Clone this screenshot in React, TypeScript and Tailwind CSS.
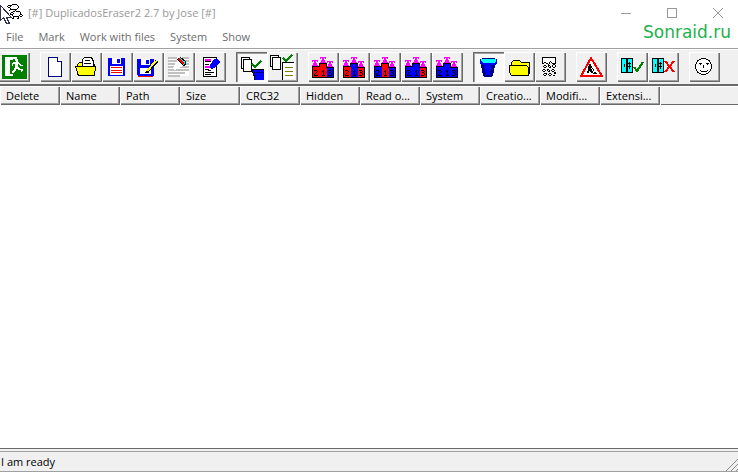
import React from 'react';
import clsx from 'clsx';

const palette: Record<string, string> = {
  k: '#000000',
  w: '#ffffff',
  m: '#ff00ff',
  b: '#0000ff',
  r: '#ff0000',
};

// Draws a little bitmap: one character per pixel, a dot is transparent.
function Bitmap({ x, y, rows }: { x: number; y: number; rows: string[] }) {
  return (
    <>
      {rows.map((row, j) =>
        row.split('').map((ch, i) =>
          palette[ch] ? (
            <rect key={`${i}-${j}`} x={x + i} y={y + j} width="1" height="1" fill={palette[ch]} />
          ) : null
        )
      )}
    </>
  );
}

const ExitIcon = () => (
  <>
    <path fill="#008000" d="M2 3h25v24H2z" />
    <path fill="#fff" d="M5 5h12v2h-4v1h-2v14h2v2H5z" />
    <path fill="#008000" d="M10 8h1v14h-1z" />
    <Bitmap
      x={12}
      y={7}
      rows={[
        '...www.....',
        '...www.....',
        '....ww.....',
        '.wwwwww....',
        'wwwwwwww...',
        'w..www.ww..',
        'w..www..www',
        '...www.....',
        '...wwww....',
        '..wwwwww...',
        '..ww..wwwww',
        '.www.....ww',
        'www......w.',
        'ww.........',
      ]}
    />
  </>
);

const PageIcon = () => (
  <>
    <path fill="#fff" stroke="#000080" d="M8.500 5.500h9l4 4v15h-13z" />
    <path fill="#fff" stroke="#000080" d="M17.500 5.500v4h4" />
  </>
);

const OpenIcon = () => (
  <>
    <path fill="#ff0" stroke="#000" d="M6.500 22.500v-10l2-2h4v2h11v10z" />
    <path fill="#fff" stroke="#000" d="M11.500 14.500v-7l2-2h7l2 4v5z" />
    <path stroke="#000" d="M14 8.500h5M13 11.500h7" />
    <path fill="#ff0" stroke="#000" d="M4.500 14.500h20l-1 9h-16z" />
  </>
);

const SaveIcon = () => (
  <>
    <path fill="#00f" d="M6 6h16l1 1v17H6z" />
    <path fill="#fff" d="M10 6h9v6h-9zM8 14h13v9H8z" />
    <path fill="#00f" d="M15 7h3v4h-3z" />
    <path stroke="#f00" d="M9 15.500h11M9 18.500h11M9 20.500h11" />
  </>
);

const SaveAsIcon = () => (
  <>
    <path fill="#00f" d="M4 7h17v17H5l-1-1z" />
    <path fill="#fff" d="M8 7h9v6H8zM7 16h11v6H7z" />
    <path fill="#00f" d="M13 8h3v4h-3z" />
    <path stroke="#f00" d="M5 24.500h15" />
    <path stroke="#000" strokeWidth="3" d="M24 9L14 20" />
    <path stroke="#ff0" strokeWidth="2" d="M23 9L14 19" />
    <path stroke="#000" d="M12 20.500h3" />
  </>
);

const EraserIcon = () => (
  <>
    <path fill="#fff" d="M5 5h20v19H5z" />
    <path
      stroke="#c0c0c0"
      strokeWidth="2"
      d="M4 6h9M18 6h7M4 9h9M20 9h5M4 12h7M20 12h5M4 15h6M16 15h9M4 18h21M4 21h17M4 24h12"
    />
    <path fill="#fff" d="M9 15l5-5 4 2 1 2-5 3-4 1z" />
    <path fill="#0ff" stroke="#000" d="M13.500 7.500l3-2 5 4v3l-2 1z" />
    <path stroke="#f00" strokeWidth="2" d="M15 7l5 5" />
  </>
);

const EditIcon = () => (
  <>
    <path fill="#fff" stroke="#000" d="M8.500 5.500h13v19h-13z" />
    <path stroke="#f0f" strokeWidth="2" d="M10 8h6M10 15h5" />
    <path stroke="#000" d="M10 9.500h6M10 12.500h4M10 17.500h4M10 20.500h9M10 22.500h6" />
    <path fill="#00f" d="M15 13l4-6h4l2 3-5 6-4 1-1-1z" />
    <path stroke="#000" d="M13 18.500h3" />
  </>
);

const Check = ({ x, y }: { x: number; y: number }) => (
  <path fill="none" stroke="#008000" strokeWidth="2" d={`M${x} ${y}l3 3 6-6`} />
);

const MarkAllIcon = () => (
  <>
    <path fill="#fff" stroke="#000" d="M5.500 5.500h8v11h-8z" />
    <path fill="#fff" stroke="#000" d="M7.500 7.500h8v12h-8z" />
    <Check x={16} y={12} />
    <path fill="#00f" d="M17 18h11v10h-9l-1-7h-1z" />
    <path fill="none" stroke="#000" d="M28 17.500H16.500v3h1v3h1v4" />
    <path stroke="#000080" d="M18 20.500h10" />
  </>
);

const MarkListIcon = () => (
  <>
    <path fill="#fff" stroke="#000" d="M3.500 3.500h8v11h-8z" />
    <path fill="#fff" stroke="#000" d="M5.500 5.500h8v12h-8z" />
    <path fill="#fff" d="M16 10h12v17H16z" />
    <Check x={16} y={6} />
    <path fill="none" stroke="#000" d="M27 10.500H15.500v17" />
    <path stroke="#808000" d="M18 15.500h8M18 19.500h8M18 23.500h8" />
  </>
);

const figure = ['mmmmmm', 'm.mm.m', '..mm..', '.mmmm.', '.mmmm.', 'mmmmmm'];

// The three letters are the colours of the second, first and third step.
function PodiumIcon({ steps }: { steps: string }) {
  const [second, first, third] = steps.split('').map((s) => palette[s]);
  return (
    <>
      <Bitmap x={4} y={8} rows={figure} />
      <Bitmap x={12} y={5} rows={figure} />
      <Bitmap x={19} y={9} rows={figure} />
      <path fill={second} d="M4 15h8v11H4z" />
      <path fill={first} d="M12 11h7v15h-7z" />
      <path fill={third} d="M19 16h7v10h-7z" />
      <path fill="none" stroke="#000" d="M4.500 26V14.500h7v-3h7v4h7V26M4 25.500h22" />
      <Bitmap x={6} y={18} rows={['kkk.', '...k', '..k.', '.k..', 'k...', 'kkkk']} />
      <Bitmap x={14} y={18} rows={['.k.', 'kk.', '.k.', '.k.', '.k.', 'kkk']} />
      <Bitmap x={20} y={18} rows={['kkk.', '...k', '.kk.', '...k', '...k', 'kkk.']} />
    </>
  );
}

const BucketIcon = () => (
  <>
    <path fill="#000080" d="M7 7h2V6h13v1h2v4l-2 2-2 11-2 1h-6l-2-1-2-11-1-1z" />
    <path fill="#00f" d="M7 9h3v2h11V9h3v2l-2 2h-4l-1 10h-4l-2-10H8l-1-1z" />
    <path fill="#0ff" d="M8 7h15v2l-2 2H10L8 9z" />
  </>
);

const FolderIcon = () => (
  <>
    <path fill="#ff0" stroke="#000" d="M7.500 13.500v-3l2-2h6l2 2h8v11h-2" />
    <path fill="#ff0" stroke="#000" d="M5.500 13.500h17l2 2v8h-17l-2-3z" />
  </>
);

const ShredIcon = () => (
  <>
    <path fill="#fff" stroke="#000" d="M7.500 5.500h13v6h-3l-2-2-2 3-3-2-3 1z" />
    <Bitmap
      x={7}
      y={12}
      rows={[
        '...........kk..',
        '..kk..kk..k..k.',
        '.k..k.kwk.k..k.',
        '..kk...kk..kk..',
        '...............',
        '.kk..kk...kk...',
        'kwwk.kwk.kwwk..',
        '.kk...kk..kk...',
        '............kk.',
        '..kkk..kk...kk.',
        '.kwwk.kwwk.....',
        '..kk...kk..kk..',
      ]}
    />
  </>
);

const WorksIcon = () => (
  <>
    <path fill="#fff" stroke="#f00" strokeWidth="2" d="M15 6L5 24h21z" />
    <path fill="#000" d="M13 12h2v2h-2zM12 14h3v3h1l1 4h-2l-1-3-1 3h-2l1-4zM19 19l2 3h-4z" />
    <path stroke="#000" d="M15 14.500l3 4" />
  </>
);

const Doors = () => (
  <>
    <path fill="#0ff" d="M4 7h12v13H4z" />
    <path fill="none" stroke="#000" d="M4.500 6.500h5v14h-5zM10.500 6.500h5v14h-5zM10 11.500h4M10 14.500h4M12.500 10v7M7.500 12v3" />
  </>
);

const DoorCheckIcon = () => (
  <>
    <Doors />
    <path fill="none" stroke="#008000" strokeWidth="2" d="M17 15l3 4 6-9" />
  </>
);

const DoorCrossIcon = () => (
  <>
    <Doors />
    <path stroke="#f00" strokeWidth="2" d="M17 9l9 11M26 9l-9 11" />
  </>
);

const FaceIcon = () => (
  <>
    <circle cx="14.500" cy="14.500" r="8" fill="#fff" stroke="#000" />
    <path
      stroke="#000"
      d="M10 11.500h3M17 11.500h3M11 12.500h1M18 12.500h1M14.500 13v3M11 18.500h1M12 19.500h6M18 18.500h1"
    />
  </>
);

interface Tool {
  label: string;
  icon: React.ReactNode;
  pressed?: boolean;
}

const groups: Tool[][] = [
  [
    { label: 'New', icon: <PageIcon /> },
    { label: 'Open', icon: <OpenIcon /> },
    { label: 'Save', icon: <SaveIcon /> },
    { label: 'Save as', icon: <SaveAsIcon /> },
    { label: 'Clear list', icon: <EraserIcon /> },
    { label: 'Edit', icon: <EditIcon /> },
  ],
  [
    { label: 'Mark to delete', icon: <MarkAllIcon />, pressed: true },
    { label: 'Mark in list', icon: <MarkListIcon /> },
  ],
  [
    { label: 'Mark first and second', icon: <PodiumIcon steps="rrb" /> },
    { label: 'Mark second and third', icon: <PodiumIcon steps="rbr" /> },
    { label: 'Mark first', icon: <PodiumIcon steps="brb" /> },
    { label: 'Mark third', icon: <PodiumIcon steps="bbr" /> },
    { label: 'Mark none', icon: <PodiumIcon steps="bbb" /> },
  ],
  [
    { label: 'Send to bin', icon: <BucketIcon />, pressed: true },
    { label: 'Move to folder', icon: <FolderIcon /> },
    { label: 'Shred', icon: <ShredIcon /> },
  ],
  [{ label: 'Work', icon: <WorksIcon /> }],
  [
    { label: 'Accept', icon: <DoorCheckIcon /> },
    { label: 'Reject', icon: <DoorCrossIcon /> },
  ],
  [{ label: 'About', icon: <FaceIcon /> }],
];

const menus = ['File', 'Mark', 'Work with files', 'System', 'Show'];

const columns = [
  'Delete', 'Name', 'Path', 'Size', 'CRC32', 'Hidden',
  'Read o...', 'System', 'Creatio...', 'Modifi...', 'Extensi...',
];

function ToolButton({ label, icon, pressed }: Tool) {
  return (
    <button
      type="button"
      aria-label={label}
      aria-pressed={pressed}
      className={clsx(
        'shrink-0',
        pressed
          ? 'bg-[#f8f8f8] shadow-[inset_1px_1px_0_#696969,inset_2px_2px_0_#a0a0a0,inset_-1px_-1px_0_#ffffff]'
          : 'bg-[#f0f0f0] shadow-[inset_1px_1px_0_#ffffff,inset_-1px_-1px_0_#696969,inset_-2px_-2px_0_#a0a0a0]'
      )}
    >
      <svg className="block" width="31" height="30" viewBox="0 0 31 30" fill="none" shapeRendering="crispEdges">
        {icon}
      </svg>
    </button>
  );
}

function TitleBar() {
  return (
    <header className="flex h-[25px] items-center text-[#999999]">
      <svg className="mr-1 shrink-0" width="24" height="25" viewBox="0 0 24 25" shapeRendering="crispEdges">
        <Bitmap
          x={7}
          y={4}
          rows={[
            '.....kkkkk......',
            '.kkkk.....k.....',
            'k..k.......k....',
            '.kk........k....',
            '...k......k.....',
            '...kkkkkkk......',
            '..k.....k.......',
            '......kk.kkkk...',
            '....kk.......k..',
            '...k..k......k..',
            '...kkk.......kk.',
            '.....k......k..k',
            '......kkkkkk.kk.',
            '......k....k....',
            '.....kk...kk....',
          ]}
        />
        <path fill="#fff" stroke="#33334d" d="M0.500 5.500v15l3-3 3 6h3l-3-6h5z" />
      </svg>
      <h1>[#] DuplicadosEraser2 2.7 by Jose [#]</h1>
      <div className="ml-auto flex gap-9 pr-[15px]">
        <button type="button" aria-label="Minimize">
          <svg className="block" width="10" height="10" stroke="#999999" shapeRendering="crispEdges">
            <path d="M0 5.500h10" />
          </svg>
        </button>
        <button type="button" aria-label="Maximize">
          <svg
            className="block"
            width="10"
            height="10"
            fill="none"
            stroke="#999999"
            shapeRendering="crispEdges"
          >
            <path d="M0.500 0.500h9v9h-9z" />
          </svg>
        </button>
        <button type="button" aria-label="Close">
          <svg className="block" width="10" height="10" stroke="#999999">
            <path d="M0 0l10 10M10 0L0 10" />
          </svg>
        </button>
      </div>
    </header>
  );
}

export default function App() {
  return (
    <div className="relative flex h-screen flex-col overflow-hidden bg-white font-['Open_Sans','Noto_Sans',sans-serif] text-[11px] leading-4 text-black">
      <TitleBar />
      <span className="absolute top-5 right-[7px] font-['DejaVu_Sans',sans-serif] text-[17px] leading-6 text-[#22b14c]">
        Sonraid.ru
      </span>

      <nav className="flex h-[23px] items-center gap-[15px] pl-[6px] text-[#6d6d6d]">
        {menus.map((menu) => (
          <button key={menu} type="button">
            {menu}
          </button>
        ))}
      </nav>

      <div
        role="toolbar"
        aria-label="Tools"
        className="flex h-9 shrink-0 gap-[10px] border-t border-[#a0a0a0] bg-[#f0f0f0] pt-[3px] shadow-[inset_0_1px_0_#ffffff]"
      >
        <button
          type="button"
          aria-label="Exit"
          className="h-[30px] shrink-0 bg-[#f0f0f0] shadow-[inset_0_1px_0_#ffffff,inset_-1px_-1px_0_#696969,inset_-2px_-2px_0_#a0a0a0]"
        >
          <svg className="block" width="30" height="30" viewBox="0 0 30 30" fill="none" shapeRendering="crispEdges">
            <ExitIcon />
          </svg>
        </button>
        {groups.map((group, i) => (
          <div key={i} className="flex h-[30px]">
            {group.map((tool) => (
              <ToolButton key={tool.label} {...tool} />
            ))}
          </div>
        ))}
      </div>

      <main className="flex-1 border-t-2 border-[#696969]">
        <table className="w-full table-fixed border-collapse">
          <thead>
            <tr className="h-[19px] bg-[#f0f0f0]">
              {columns.map((column, i) => (
                <th
                  key={i}
                  scope="col"
                  className="w-[60px] overflow-hidden p-0 pl-[6px] text-left leading-[18px] font-normal whitespace-nowrap shadow-[inset_1px_1px_0_#ffffff,inset_-1px_-1px_0_#696969,inset_-2px_-2px_0_#a0a0a0]"
                >
                  {column}
                </th>
              ))}
              <td className="p-0 shadow-[inset_1px_1px_0_#ffffff,inset_0_-1px_0_#696969]" />
            </tr>
          </thead>
        </table>
      </main>

      <footer className="flex h-6 shrink-0 flex-col border-t border-[#696969] bg-[#f0f0f0] pt-[2px]">
        <div className="flex flex-1 items-center justify-between border-t border-b border-[#a0a0a0] pl-px">
          <p role="status">I am ready</p>
          <svg className="self-end" width="12" height="12" stroke="#8c8c8c">
            <path d="M0 12L12 0M5 12l7-7M10 12l2-2" />
          </svg>
        </div>
      </footer>
    </div>
  );
}
